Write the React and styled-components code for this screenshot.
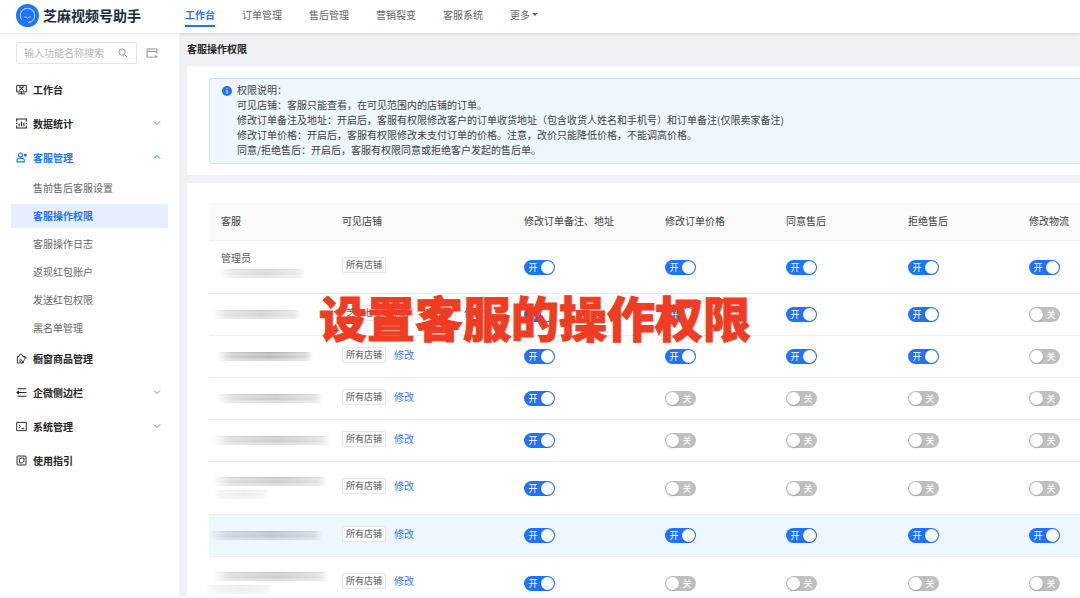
import React, { useState } from 'react';
import styled, { createGlobalStyle, css } from 'styled-components';

const BLUE = '#1f73fc';

const GlobalStyle = createGlobalStyle`
  *, *::before, *::after { box-sizing: border-box; }
  body {
    margin: 0;
    font: 10px/15px "Noto Sans CJK SC", "Noto Sans", sans-serif;
    color: #404040;
    background: #fafafa;
  }
  button, input { font: inherit; color: inherit; }
  a { color: inherit; text-decoration: none; }
`;

const Page = styled.div`
  position: relative;
  display: flex;
  flex-direction: column;
  height: 100vh;
  padding-bottom: 2px;
  overflow: hidden;
`;

const Header = styled.header`
  position: relative;
  z-index: 1;
  display: flex;
  flex: none;
  height: 33px;
  background: #fff;
  box-shadow: 0 1px 3px rgba(0, 0, 0, 0.12);
`;

const Brand = styled.a`
  display: flex;
  align-items: center;
  gap: 4px;
  width: 185px;
  padding: 0 0 2px 16px;
  font-size: 14px;
  font-weight: 700;
  color: #222a38;
  white-space: nowrap;
`;

const Nav = styled.nav`
  display: flex;
  align-items: flex-start;
  gap: 27px;
  padding-top: 6px;
`;

const navItem = css`
  height: 21px;
  padding: 1px 0 3px;
  border: 0;
  border-bottom: 2px solid transparent;
  background: none;
  color: #666;
  white-space: nowrap;
`;

const NavLink = styled.a`
  ${navItem}
  ${(p) => p.$active && css`
    color: ${BLUE};
    border-color: ${BLUE};
    font-weight: 700;
  `}
`;

const NavMore = styled.button`
  ${navItem}
  display: flex;
  align-items: center;
  gap: 2px;
  cursor: pointer;
`;

const Caret = styled.span`
  border: 3px solid transparent;
  border-top-color: #666;
  border-bottom: 0;
`;

const Body = styled.div`
  display: flex;
  flex: 1;
  min-height: 0;
`;

const Sidebar = styled.aside`
  flex: none;
  width: 179px;
  padding-top: 9px;
  background: #fff;
`;

const SearchRow = styled.div`
  display: flex;
  align-items: center;
  gap: 9px;
  padding: 0 16px 8px;
  color: #8c8c8c;
`;

const SearchBox = styled.label`
  display: flex;
  align-items: center;
  width: 121px;
  height: 22px;
  padding: 0 8px 0 7px;
  border: 1px solid #e6e6e6;
  border-radius: 2px;
`;

const SearchInput = styled.input`
  flex: 1;
  min-width: 0;
  padding: 0 0 2px;
  border: 0;
  outline: 0;
  background: none;
  &::placeholder { color: #b5b5b5; }
`;

const IconButton = styled.button`
  display: flex;
  padding: 0;
  border: 0;
  background: none;
  cursor: pointer;
`;

const MenuButton = styled.button`
  display: flex;
  align-items: center;
  gap: 6px;
  width: 100%;
  height: 34px;
  padding: 0 18px 0 16px;
  border: 0;
  background: none;
  font-weight: 700;
  color: ${(p) => (p.$active ? BLUE : '#262626')};
  text-align: left;
  cursor: pointer;
`;

const MenuLabel = styled.span`
  flex: 1;
`;

const SubMenu = styled.div`
  display: flex;
  flex-direction: column;
  gap: 4px;
  padding: 2px 11px 1px;
`;

const SubLink = styled.a`
  height: 24px;
  padding-left: 22px;
  line-height: 24px;
  color: #666;
  ${(p) => p.$active && css`
    color: ${BLUE};
    background: #e5efff;
    font-weight: 700;
  `}
`;

const Main = styled.main`
  flex: 1;
  min-width: 0;
  padding-left: 8px;
  overflow: hidden;
  background: #eff1f5;
`;

const Content = styled.div`
  display: flex;
  flex-direction: column;
  gap: 8px;
  min-width: 960px;
`;

const PageTitle = styled.h1`
  margin: 0;
  padding: 8px 0 1px;
  font-size: 10px;
  line-height: 16px;
  color: #262626;
`;

const Card = styled.section`
  padding: ${(p) => p.$top}px 22px 11px;
  background: #fff;
`;

const Notice = styled.div`
  display: flex;
  gap: 5px;
  padding: 3px 12px 6px;
  border: 1px solid #c9e3fd;
  border-radius: 3px;
  background: #eef7ff;
`;

const NoticeIcon = styled.svg`
  flex: none;
  width: 10px;
  height: 16px;
`;

const NoticeText = styled.p`
  margin: 0;
  white-space: nowrap;
`;

const Table = styled.table`
  width: 100%;
  table-layout: fixed;
  border-collapse: separate;
  border-spacing: 0;
`;

const Th = styled.th`
  height: 38px;
  padding: 0 0 2px 12px;
  width: ${(p) => (p.$width ? `${p.$width}px` : 'auto')};
  border-bottom: 1px solid #ededed;
  background: #fafafa;
  font-weight: 400;
  text-align: left;
  white-space: nowrap;
`;

const Tr = styled.tr`
  height: ${(p) => (p.$tall ? 53 : 42)}px;
  background: ${(p) => (p.$highlight ? '#eef6ff' : '#fff')};
`;

const Td = styled.td`
  padding: 0 0 0 12px;
  border-bottom: 1px solid #ededed;
  vertical-align: middle;
`;

const Staff = styled.div`
  display: flex;
  flex-direction: column;
  gap: 4px;
  padding-bottom: ${(p) => (p.$named ? 6 : 0)}px;
`;

const StaffName = styled.span`
  color: #595959;
`;

const Smudge = styled.span`
  width: ${(p) => p.$width}px;
  height: 9px;
  margin-left: ${(p) => p.$shift}px;
  background: linear-gradient(
    to right,
    transparent,
    rgba(80, 84, 90, 0.4) 15%,
    rgba(80, 84, 90, 0.6) 55%,
    rgba(80, 84, 90, 0.35) 92%,
    transparent
  );
  mask-image: linear-gradient(
    rgba(0, 0, 0, 0.8) 1px,
    rgba(0, 0, 0, 0.5) 2px,
    rgba(0, 0, 0, 0.75) 5px,
    rgba(0, 0, 0, 0.45) 7px,
    rgba(0, 0, 0, 0.45)
  );
  opacity: ${(p) => p.$strength};
`;

const Shops = styled.div`
  display: flex;
  align-items: center;
  gap: 8px;
  padding-bottom: 4px;
  white-space: nowrap;
`;

const Tag = styled.span`
  height: 16px;
  padding: 0 3px;
  border: 1px solid #e6e6e6;
  border-radius: 2px;
  background: #fafafa;
  font-size: 9px;
  line-height: 14px;
  color: #595959;
`;

const EditLink = styled.a`
  padding-bottom: 1px;
  color: #3478fd;
`;

const SwitchTrack = styled.label`
  position: relative;
  display: flex;
  flex-direction: ${(p) => (p.$on ? 'row' : 'row-reverse')};
  align-items: center;
  width: 31px;
  height: 15px;
  padding: 1px;
  border-radius: 8px;
  background: ${(p) => (p.$on ? BLUE : '#bfbfbf')};
  cursor: pointer;
`;

const SwitchInput = styled.input`
  position: absolute;
  inset: 0;
  width: 100%;
  height: 100%;
  margin: 0;
  opacity: 0;
  cursor: pointer;
`;

const SwitchText = styled.span`
  flex: 1;
  font-size: 9px;
  line-height: 13px;
  color: #fff;
  text-align: center;
`;

const Knob = styled.span`
  width: 13px;
  height: 13px;
  border-radius: 50%;
  background: #fff;
  box-shadow: 0 1px 2px rgba(0, 35, 11, 0.2);
`;

const Caption = styled.div`
  position: absolute;
  z-index: 2;
  top: 280px;
  left: 319px;
  font-size: 48px;
  font-weight: 900;
  line-height: 72px;
  color: #f03c22;
  -webkit-text-stroke: 1px #f03c22;
  white-space: nowrap;
  pointer-events: none;
`;

const Icon = ({ children, size = 11, width = 1.4 }) => (
  <svg width={size} height={size} viewBox="0 0 16 16" fill="none" stroke="currentColor" strokeWidth={width} aria-hidden="true">
    {children}
  </svg>
);

const icons = {
  desk: (
    <Icon>
      <path d="M1 2h14v9.500H1zM8 11v3M3 14.300h10M4.500 4l7 5.500M11.500 4l-7 5.500M5 4.500h6" />
    </Icon>
  ),
  stats: (
    <Icon width={1.6}>
      <path d="M1 5V1.500h14V5M1 11v3.500h14V11M4.500 8v4M8 5v7M11.500 7v5M0 8h2M14 8h2" />
    </Icon>
  ),
  service: (
    <Icon width={1.6}>
      <circle cx="6.500" cy="4.500" r="3" />
      <path d="M1.500 14.300v-2q0-2.800 3-2.800h4.500q3 0 3 2.800v2z" />
      <circle cx="13.500" cy="4.500" r="1.500" fill="currentColor" />
    </Icon>
  ),
  goods: (
    <Icon>
      <path d="M10 14.500H2V5h2.500Q4.500 1.500 7 1.500T9.500 5H12v2.500M12 5l3 1.500-3.500 3M6 8l5.500 6.500M6 14V9.500M9 14.500l3-4" />
    </Icon>
  ),
  sidebar: (
    <Icon width={1.6}>
      <path d="M2 2.500h13M6 8h9M2 13.500h13M4 5.500L1.500 8 4 10.500M1 8h6" />
    </Icon>
  ),
  system: (
    <Icon>
      <path d="M1 2h14v12H1zM4 5.500L6.500 8 4 10.500M8 11h4" />
    </Icon>
  ),
  guide: (
    <Icon>
      <rect x="1.500" y="1.500" width="13" height="13" rx="1" />
      <path d="M5 11V6.500L7 4.500h4.500V9l-2 2.500H5M4 4.500h2" />
    </Icon>
  ),
};

const Chevron = ({ up }) => (
  <svg width="8" height="6" viewBox="0 0 8 6" fill="none" stroke={up ? BLUE : '#8c8c8c'} aria-hidden="true">
    <path d={up ? 'M1 4.500L4 1.500l3 3' : 'M1 1.500l3 3 3-3'} />
  </svg>
);

const Logo = () => (
  <svg width="23" height="23" viewBox="0 0 23 23" fill="none" aria-hidden="true">
    <circle cx="11.500" cy="11.500" r="11.500" fill={BLUE} />
    <path d="M5.600 15.700A7.200 7.200 0 1 1 12 18.700" stroke="#a9cbff" strokeWidth="1.100" />
    <path d="M12 18.700q3.500-.4 5-2.800M8.300 12.700q3.200 2.400 6.400 0" stroke="#a9cbff" strokeWidth="1" />
  </svg>
);

const navLinks = ['工作台', '订单管理', '售后管理', '营销裂变', '客服系统'];

const menu = [
  { label: '工作台', icon: 'desk' },
  { label: '数据统计', icon: 'stats', expandable: true },
  {
    label: '客服管理',
    icon: 'service',
    expandable: true,
    open: true,
    children: ['售前售后客服设置', '客服操作权限', '客服操作日志', '返现红包账户', '发送红包权限', '黑名单管理'],
  },
  { label: '橱窗商品管理', icon: 'goods' },
  { label: '企微侧边栏', icon: 'sidebar', expandable: true },
  { label: '系统管理', icon: 'system', expandable: true },
  { label: '使用指引', icon: 'guide' },
];

const notes = [
  '权限说明：',
  '可见店铺：客服只能查看，在可见范围内的店铺的订单。',
  '修改订单备注及地址：开启后，客服有权限修改客户的订单收货地址（包含收货人姓名和手机号）和订单备注(仅限卖家备注)',
  '修改订单价格：开启后，客服有权限修改未支付订单的价格。注意，改价只能降低价格，不能调高价格。',
  '同意/拒绝售后：开启后，客服有权限同意或拒绝客户发起的售后单。',
];

const columns = [
  { label: '客服', width: 121 },
  { label: '可见店铺', width: 182 },
  { label: '修改订单备注、地址', width: 141 },
  { label: '修改订单价格', width: 121 },
  { label: '同意售后', width: 122 },
  { label: '拒绝售后', width: 121 },
  { label: '修改物流' },
];

// Each smudge hides a staff account: [shift, width, strength].
const staff = [
  { name: '管理员', tall: true, smudges: [[-2, 86, 0.5]], shops: ['所有店铺'], locked: true, on: [1, 1, 1, 1, 1] },
  { smudges: [[-8, 88, 0.6]], shops: ['芝麻七七的小店', '芝麻店'], on: [1, 1, 1, 1, 0] },
  { smudges: [[-4, 96, 0.95]], shops: ['所有店铺'], on: [1, 1, 1, 1, 0] },
  { smudges: [[-4, 106, 0.7]], shops: ['所有店铺'], on: [1, 0, 0, 0, 0] },
  { smudges: [[-8, 118, 0.7]], shops: ['所有店铺'], on: [1, 0, 0, 0, 0] },
  { tall: true, smudges: [[-8, 114, 0.7], [-8, 56, 0.25]], shops: ['所有店铺'], on: [1, 0, 0, 0, 0] },
  { highlight: true, smudges: [[-12, 114, 0.7]], shops: ['所有店铺'], on: [1, 1, 1, 1, 1] },
  { tall: true, smudges: [[-8, 116, 0.7], [-16, 68, 0.25]], shops: ['所有店铺'], on: [1, 0, 0, 0, 0] },
];

function Switch({ initial, label }) {
  const [on, setOn] = useState(Boolean(initial));
  return (
    <SwitchTrack $on={on}>
      <SwitchInput type="checkbox" role="switch" aria-label={label} checked={on} onChange={() => setOn(!on)} />
      <SwitchText>{on ? '开' : '关'}</SwitchText>
      <Knob />
    </SwitchTrack>
  );
}

function MenuItem({ item }) {
  const [open, setOpen] = useState(Boolean(item.open));
  return (
    <>
      <MenuButton $active={item.open} onClick={() => setOpen(!open)}>
        {icons[item.icon]}
        <MenuLabel>{item.label}</MenuLabel>
        {item.expandable && <Chevron up={open} />}
      </MenuButton>
      {item.children && open && (
        <SubMenu>
          {item.children.map((label) => (
            <SubLink key={label} href="#" $active={label === '客服操作权限'}>{label}</SubLink>
          ))}
        </SubMenu>
      )}
    </>
  );
}

export default function App() {
  return (
    <Page>
      <GlobalStyle />
      <Header>
        <Brand href="#"><Logo />芝麻视频号助手</Brand>
        <Nav>
          {navLinks.map((label, i) => (
            <NavLink key={label} href="#" $active={i === 0}>{label}</NavLink>
          ))}
          <NavMore>更多<Caret /></NavMore>
        </Nav>
      </Header>
      <Body>
        <Sidebar>
          <SearchRow>
            <SearchBox>
              <SearchInput placeholder="输入功能名称搜索" aria-label="输入功能名称搜索" />
              <Icon size={10}>
                <circle cx="6.500" cy="6.500" r="5" />
                <path d="M10.500 10.500L15 15" />
              </Icon>
            </SearchBox>
            <IconButton aria-label="收起菜单">
              <Icon size={12} width={1.2}>
                <path d="M10 13.500H1.500v-11h13V9M1.500 6h13M4 4.200h1M11 13h4.500M13.300 11v4" />
              </Icon>
            </IconButton>
          </SearchRow>
          {menu.map((item) => <MenuItem key={item.label} item={item} />)}
        </Sidebar>
        <Main>
          <Content>
            <PageTitle>客服操作权限</PageTitle>
            <Card $top={12}>
              <Notice>
                <NoticeIcon viewBox="0 0 10 16" aria-hidden="true">
                  <circle cx="5" cy="9" r="5" fill={BLUE} />
                  <path d="M5 8v4M5 6v1" stroke="#fff" />
                </NoticeIcon>
                <div>
                  {notes.map((line) => <NoticeText key={line}>{line}</NoticeText>)}
                </div>
              </Notice>
            </Card>
            <Card $top={20}>
              <Table>
                <thead>
                  <tr>
                    {columns.map((c) => <Th key={c.label} $width={c.width}>{c.label}</Th>)}
                  </tr>
                </thead>
                <tbody>
                  {staff.map((row, r) => (
                    <Tr key={r} $tall={row.tall} $highlight={row.highlight}>
                      <Td>
                        <Staff $named={row.name}>
                          {row.name && <StaffName>{row.name}</StaffName>}
                          {row.smudges.map(([shift, width, strength], i) => (
                            <Smudge key={i} $shift={shift} $width={width} $strength={strength} />
                          ))}
                        </Staff>
                      </Td>
                      <Td>
                        <Shops>
                          {row.shops.map((shop) => <Tag key={shop}>{shop}</Tag>)}
                          {!row.locked && <EditLink href="#">修改</EditLink>}
                        </Shops>
                      </Td>
                      {row.on.map((value, i) => (
                        <Td key={i}><Switch initial={value} label={columns[i + 2].label} /></Td>
                      ))}
                    </Tr>
                  ))}
                </tbody>
              </Table>
            </Card>
          </Content>
        </Main>
      </Body>
      <Caption>设置客服的操作权限</Caption>
    </Page>
  );
}
